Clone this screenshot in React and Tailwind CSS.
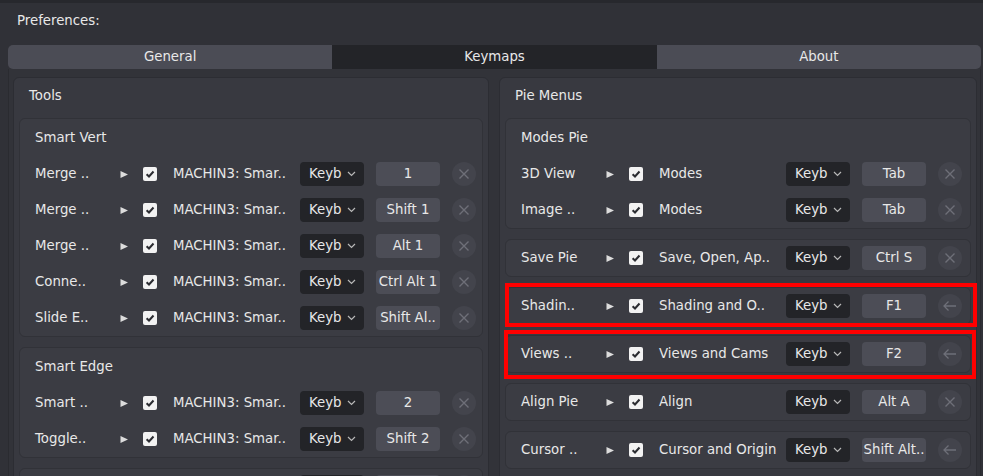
import React from 'react';

const LEFT = [
  {
    title: 'Smart Vert',
    rows: [
      ['Merge ..', 'MACHIN3: Smar..', '1', 'x'],
      ['Merge ..', 'MACHIN3: Smar..', 'Shift 1', 'x'],
      ['Merge ..', 'MACHIN3: Smar..', 'Alt 1', 'x'],
      ['Conne..', 'MACHIN3: Smar..', 'Ctrl Alt 1', 'x'],
      ['Slide E..', 'MACHIN3: Smar..', 'Shift Al..', 'x'],
    ],
  },
  {
    title: 'Smart Edge',
    rows: [
      ['Smart ..', 'MACHIN3: Smar..', '2', 'x'],
      ['Toggle..', 'MACHIN3: Smar..', 'Shift 2', 'x'],
    ],
  },
  { rows: [['', '', '', 'x']] },
];

const RIGHT = [
  {
    title: 'Modes Pie',
    rows: [
      ['3D View', 'Modes', 'Tab', 'x'],
      ['Image ..', 'Modes', 'Tab', 'x'],
    ],
  },
  { rows: [['Save Pie', 'Save, Open, Ap..', 'Ctrl S', 'x']] },
  { rows: [['Shadin..', 'Shading and O..', 'F1', 'back']], mark: 'shading' },
  { rows: [['Views ..', 'Views and Cams', 'F2', 'back']], mark: 'views' },
  { rows: [['Align Pie', 'Align', 'Alt A', 'x']] },
  { rows: [['Cursor ..', 'Cursor and Origin', 'Shift Alt..', 'back']] },
];

function Row({ label, op, keyName, action }) {
  // an empty label means the row is only peeking in at the bottom edge
  const partial = !label;
  return (
    <div className="flex h-[36px] items-center pl-[15px]">
      <span className="w-[85px] shrink-0 whitespace-nowrap">{label}</span>
      <span className="flex w-[23px] shrink-0 items-center">
        {!partial && (
          <svg width="9" height="9" viewBox="0 0 9 9">
            <path d="M0.5 1 L8 4.5 L0.5 8 Z" fill="#dcdcdc" />
          </svg>
        )}
      </span>
      <span className={`flex h-[14px] w-[14px] shrink-0 items-center justify-center rounded-[2px] ${partial ? '' : 'bg-[#f2f2f2]'}`}>
        {!partial && (
          <svg width="10" height="10" viewBox="0 0 10 10">
            <path d="M1.6 5.2 L4 7.5 L8.5 2.5" fill="none" stroke="#2b2c31" strokeWidth="2" />
          </svg>
        )}
      </span>
      <span className="ml-[16px] w-[127px] shrink-0 whitespace-nowrap">{op}</span>
      <span className="flex h-[24px] w-[64px] shrink-0 items-center justify-between rounded-[4px] bg-[#232428] pl-[9px] pr-[8px]">
        {!partial && (
          <>
            <span>Keyb</span>
            <svg width="9" height="6" viewBox="0 0 9 6">
              <path d="M1 1 L4.5 4.5 L8 1" fill="none" stroke="#b8b8b8" strokeWidth="1.2" />
            </svg>
          </>
        )}
      </span>
      <span className="ml-[12px] flex h-[24px] w-[64px] shrink-0 items-center justify-center whitespace-nowrap rounded-[4px] bg-[#4c4d56]">
        {keyName}
      </span>
      <span className="ml-[12px] flex h-[24px] w-[24px] shrink-0 items-center justify-center rounded-full bg-[#43444c]">
        {action === 'x' ? (
          <svg width="12" height="12" viewBox="0 0 12 12">
            <path d="M1.5 1.5 L10.5 10.5 M10.5 1.5 L1.5 10.5" stroke="#6e6f78" strokeWidth="1.4" />
          </svg>
        ) : (
          <svg width="16" height="12" viewBox="0 0 16 12">
            <path d="M2 6 L14 6 M6.5 1.5 L2 6 L6.5 10.5" fill="none" stroke="#6e6f78" strokeWidth="1.3" />
          </svg>
        )}
      </span>
    </div>
  );
}

function Box({ title, rows, mark }) {
  return (
    <div className="relative shrink-0 rounded-[6px] border border-[#313238] bg-[#3b3c43]">
      {title && <div className="flex h-[37px] items-center pl-[15px]">{title}</div>}
      {rows.map((r, i) => (
        <Row key={i} label={r[0]} op={r[1]} keyName={r[2]} action={r[3]} />
      ))}
      {mark === 'shading' && (
        <div className="pointer-events-none absolute -top-[5px] -bottom-[3px] -left-[1px] -right-[7px] border-4 border-[#ff0000]" />
      )}
      {mark === 'views' && (
        <div className="pointer-events-none absolute -top-[6px] -bottom-[7px] -left-[2px] -right-[6px] border-4 border-[#ff0000]" />
      )}
    </div>
  );
}

function Panel({ title, boxes, width }) {
  return (
    <div className={`${width} flex shrink-0 flex-col rounded-[6px] border border-[#2c2d33] bg-[#383940] px-[5px]`}>
      <div className="flex h-[40px] shrink-0 items-center pb-[4px] pl-[10px]">{title}</div>
      <div className="flex flex-col gap-[10px]">
        {boxes.map((b, i) => (
          <Box key={i} {...b} />
        ))}
      </div>
    </div>
  );
}

export default function App() {
  return (
    <div
      className="flex h-[476px] w-[983px] flex-col overflow-hidden bg-[#303137] text-[13.3px] text-[#e8e8e8]"
      style={{ fontFamily: '"DejaVu Sans", sans-serif' }}
    >
      <div className="h-[3px] shrink-0 bg-[#27282d]" />
      <div className="flex h-[42px] shrink-0 items-center pb-[7px] pl-[17px]">Preferences:</div>
      <div className="ml-[8px] flex h-[24px] w-[973px] shrink-0">
        <div className="flex flex-1 items-center justify-center rounded-l-[5px] bg-[#4b4c55]">General</div>
        <div className="flex flex-1 items-center justify-center bg-[#232428]">Keymaps</div>
        <div className="flex flex-1 items-center justify-center rounded-r-[5px] bg-[#4b4c55]">About</div>
      </div>
      <div className="ml-[8px] flex w-[973px] flex-1 gap-[10px] border-x border-[#2a2b30] bg-[#323339] pl-[4px] pr-[4px] pt-[8px]">
        <Panel title="Tools" boxes={LEFT} width="w-[476px]" />
        <Panel title="Pie Menus" boxes={RIGHT} width="w-[478px]" />
      </div>
    </div>
  );
}
